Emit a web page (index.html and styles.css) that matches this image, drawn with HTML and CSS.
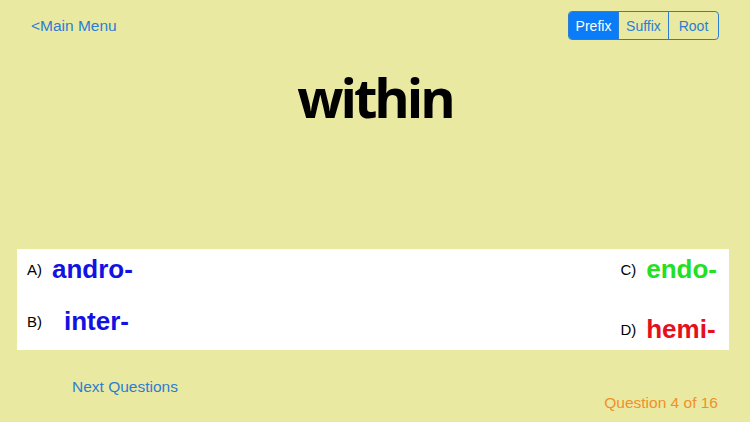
FILE: index.html
```html
<!DOCTYPE html>
<html>
<head>
<meta charset="utf-8">
<link rel="stylesheet" href="styles.css">
</head>
<body>
<div class="screen">
  <header class="top">
    <a class="link back">&lt;Main Menu</a>
    <div class="segmented">
      <span class="seg active">Prefix</span>
      <span class="seg">Suffix</span>
      <span class="seg">Root</span>
    </div>
  </header>
  <h1 class="word">within</h1>
  <section class="panel">
    <div class="col">
      <div class="opt"><span class="lbl">A)</span><span class="ans blue gap-a">andro-</span></div>
      <div class="opt"><span class="lbl">B)</span><span class="ans blue gap-b">inter-</span></div>
    </div>
    <div class="col right">
      <div class="opt"><span class="lbl">C)</span><span class="ans green gap-a">endo-</span></div>
      <div class="opt"><span class="lbl">D)</span><span class="ans red gap-a">hemi-</span></div>
    </div>
  </section>
  <footer class="bottom">
    <a class="link next">Next Questions</a>
    <span class="count">Question 4 of 16</span>
  </footer>
</div>
</body>
</html>
```
FILE: styles.css
```css
html, body {
  margin: 0;
  padding: 0;
}
body {
  background: #eae9a2;
  font-family: "Liberation Sans", Arial, sans-serif;
  width: 750px;
  height: 422px;
  overflow: hidden;
}
.screen {
  display: flex;
  flex-direction: column;
}
.top {
  display: flex;
  justify-content: space-between;
  align-items: center;
  padding: 11px 31px 0 31px;
  height: 29px;
}
.link {
  color: #2a7ed3;
  font-size: 15.5px;
}
.segmented {
  display: flex;
  border: 1px solid #2a7ed3;
  border-radius: 4px;
  overflow: hidden;
  height: 27px;
}
.seg {
  display: flex;
  align-items: center;
  justify-content: center;
  font-size: 14px;
  color: #2a7ed3;
  width: 49px;
  border-left: 1px solid #2a7ed3;
}
.seg:first-child {
  border-left: none;
}
.seg.active {
  background: #0a7cf7;
  color: #ffffff;
}
.word {
  margin: 22px 0 0 0;
  height: 70px;
  line-height: 70px;
  text-align: center;
  font-family: "Open Sans", sans-serif;
  font-weight: 700;
  font-size: 54px;
  letter-spacing: -3px;
  color: #000;
}
.panel {
  margin: 117px 21px 0 17px;
  background: #fff;
  display: flex;
  justify-content: space-between;
  height: 101px;
  padding: 0 12px 0 10px;
}
.col {
  display: flex;
  flex-direction: column;
  gap: 12px;
}
.col.right {
  gap: 20px;
}
.opt {
  display: flex;
  align-items: center;
  height: 40px;
}
.lbl {
  font-size: 15px;
  color: #000;
}
.ans {
  font-size: 26px;
  font-weight: 700;
}
.gap-a { margin-left: 10px; }
.gap-b { margin-left: 22px; }
.blue { color: #1212e2; }
.green { color: #22e022; }
.red { color: #e60f1c; }
.bottom {
  display: flex;
  justify-content: space-between;
  align-items: flex-start;
  padding: 0 32px 0 72px;
}
.next {
  margin-top: 28px;
}
.count {
  margin-top: 44px;
  font-size: 15.5px;
  color: #f0902a;
}
```
